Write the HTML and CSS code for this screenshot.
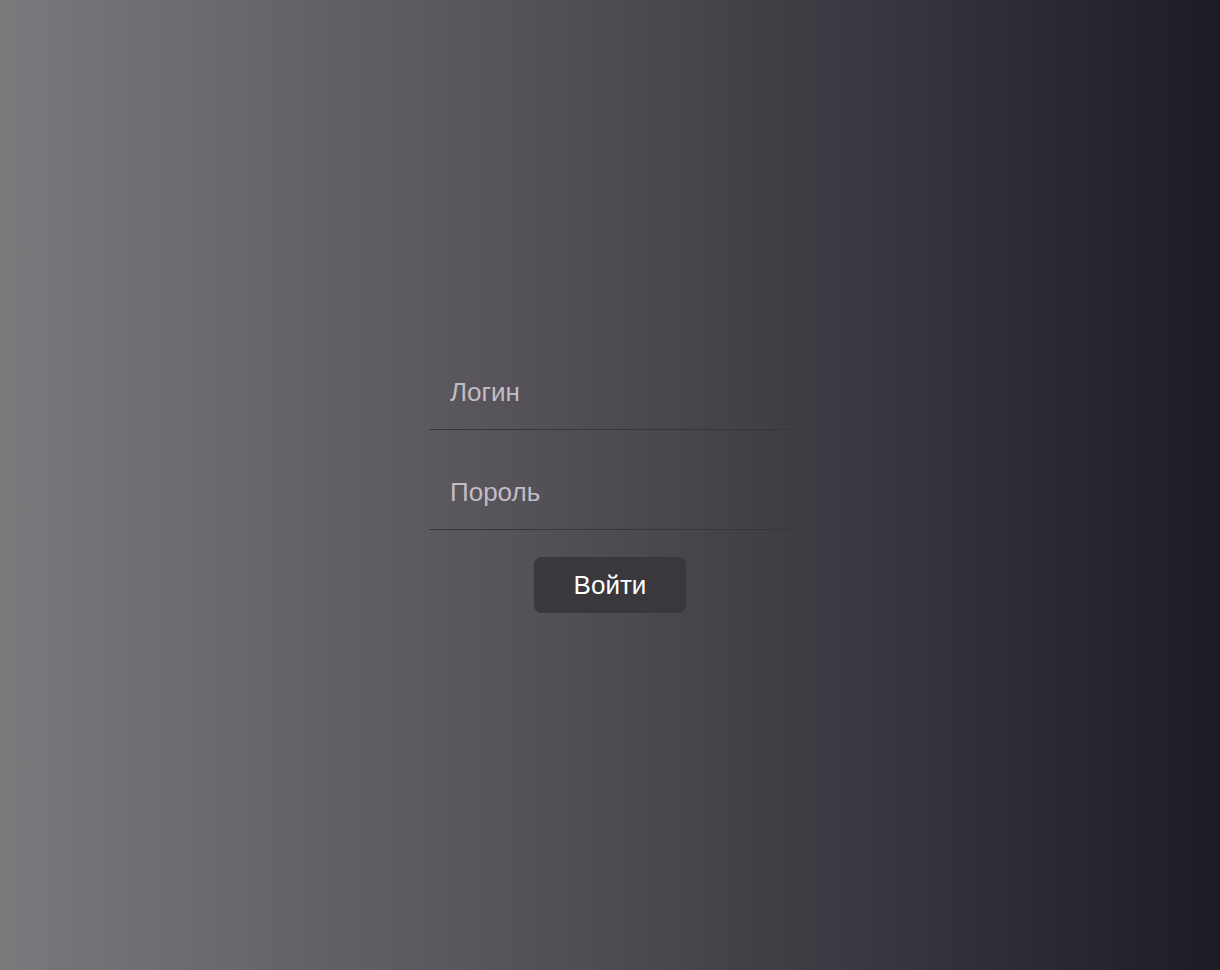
FILE: index.html
```html
<!DOCTYPE html>
<html lang="ru">
<head>
<meta charset="utf-8">
<title>Вход</title>
<link rel="stylesheet" href="styles.css">
</head>
<body>
<main class="page">
  <form class="login">
    <input class="field" type="text" placeholder="Логин">
    <input class="field" type="password" placeholder="Пороль">
    <button class="submit" type="button">Войти</button>
  </form>
</main>
</body>
</html>
```
FILE: styles.css
```css
* { box-sizing: border-box; }
html, body { margin: 0; height: 100%; }
body {
  font-family: "Liberation Sans", Arial, sans-serif;
  background: linear-gradient(90deg, #7b797c 0%, #4e4b52 50%, #1d1c25 100%);
}
.page {
  height: 970px;
  display: flex;
  align-items: center;
  justify-content: center;
}
.login {
  width: 362px;
  display: flex;
  flex-direction: column;
  align-items: center;
  gap: 27px;
}
.field {
  width: 100%;
  height: 73px;
  padding: 0 21px 2px;
  background: transparent;
  border: none;
  border-bottom: 1px solid #38363b;
  font-family: inherit;
  font-size: 26px;
  color: #fff;
  outline: none;
}
.field::placeholder { color: #c3bcc4; }
.submit {
  width: 152px;
  height: 56px;
  border: none;
  border-radius: 8px;
  background: #3a383d;
  color: #fff;
  font-family: inherit;
  font-size: 26px;
  cursor: pointer;
}
```
